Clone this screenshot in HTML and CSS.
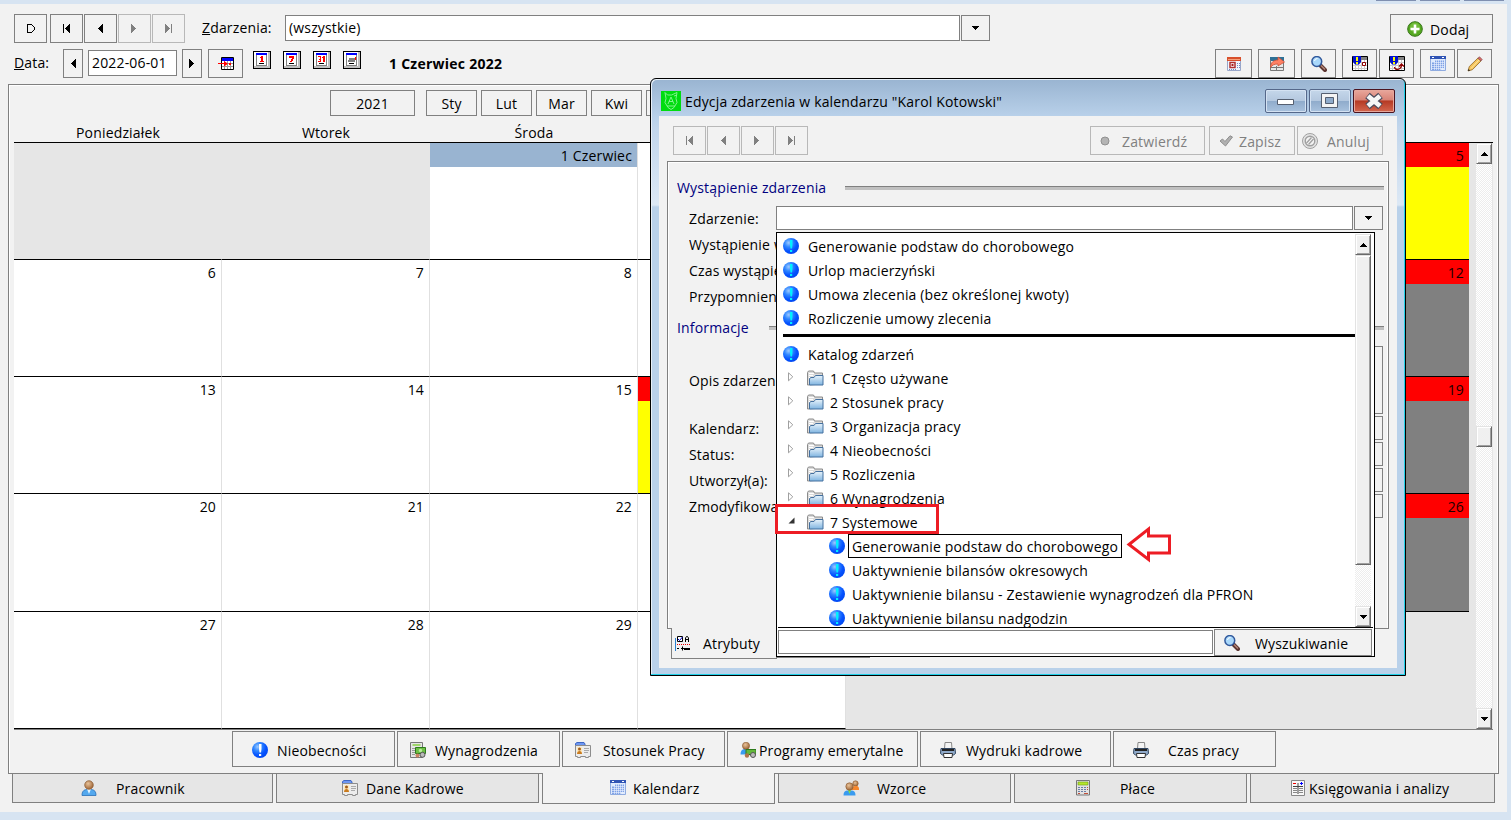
FILE: index.html
```html
<!DOCTYPE html>
<html lang="pl">
<head>
    <meta charset="UTF-8">
    <title>Kalendarz</title>
    <link rel="stylesheet" href="styles.css">
</head>
<body>
    <!-- icons -->
    <svg class="defs" width="0" height="0">
        <defs>
            <radialGradient id="ball" cx="0.35" cy="0.3" r="0.75">
                <stop offset="0" stop-color="#9cc9ff"/>
                <stop offset="0.35" stop-color="#2f86ff"/>
                <stop offset="0.7" stop-color="#0552ff"/>
                <stop offset="1" stop-color="#0048f0"/>
            </radialGradient>
            <linearGradient id="folderFill" x1="0" y1="0" x2="0" y2="1">
                <stop offset="0" stop-color="#e8f3fb"/>
                <stop offset="1" stop-color="#7fb4e0"/>
            </linearGradient>
            <radialGradient id="skin" cx="0.4" cy="0.35" r="0.7">
                <stop offset="0" stop-color="#e8c39a"/>
                <stop offset="1" stop-color="#9a5f30"/>
            </radialGradient>
        </defs>
        <symbol id="first" viewBox="0 0 12 12"><path d="M3 2h1v9H3zM9 2h1v9H9zM8 3h1v7H8zM7 4h1v5H7zM6 5h1v3H6zM5 6h1v1H5z" fill="currentColor"/></symbol>
        <symbol id="prev" viewBox="0 0 12 12"><path d="M8 2h1v9H8zM7 3h1v7H7zM6 4h1v5H6zM5 5h1v3H5zM4 6h1v1H4z" fill="currentColor"/></symbol>
        <symbol id="next" viewBox="0 0 12 12"><path d="M3 2h1v9H3zM4 3h1v7H4zM5 4h1v5H5zM6 5h1v3H6zM7 6h1v1H7z" fill="currentColor"/></symbol>
        <symbol id="last" viewBox="0 0 12 12"><path d="M9 2h1v9H9zM3 2h1v9H3zM4 3h1v7H4zM5 4h1v5H5zM6 5h1v3H6zM7 6h1v1H7z" fill="currentColor"/></symbol>
        <symbol id="play" viewBox="0 0 12 12"><path d="M3 2h5v1H4v7h4v1H3zM8 3h1v1H8zM9 4h1v1H9zM10 5h1v3h-1zM9 8h1v1H9zM8 9h1v1H8z" fill="#000"/></symbol>
        <symbol id="down" viewBox="0 0 7 4"><path d="M0 0h7v1H0zM1 1h5v1H1zM2 2h3v1H2zM3 3h1v1H3z" fill="#000"/></symbol>
        <symbol id="up" viewBox="0 0 7 4"><path d="M0 3h7v1H0zM1 2h5v1H1zM2 1h3v1H2zM3 0h1v1H3z" fill="#000"/></symbol>
        <symbol id="info" viewBox="0 0 16 16"><circle cx="8" cy="8" r="8" fill="url(#ball)"/><path d="M7 2h2.500v5L9 10.500H7.500L7 7zM7 12h2.200v2H7z" fill="#00f0ff"/></symbol>
        <symbol id="infoWhite" viewBox="0 0 16 16"><circle cx="8" cy="8" r="8" fill="url(#ball)"/><path d="M7 2h2.500v5L9 10.500H7.500L7 7zM7 12h2.200v2H7z" fill="#fff"/></symbol>
        <symbol id="folder" viewBox="0 0 17 16">
            <path d="M.5 15V2.500l1-1.500h5l1 2h8V14z" fill="#dcdcdc" stroke="#8a8a8a"/>
            <path d="M2 3.500h5M2 5.500h4M2 7.500h1M2 9.500h1M2 11.500h1" stroke="#fff"/>
            <path d="M2.500 15V8.500L4 7.500h3l1.500-2H16v9.500z" fill="url(#folderFill)" stroke="#44709f"/>
        </symbol>
        <symbol id="closed" viewBox="0 0 6 10"><path d="M.5.8v8L4.800 4.800z" fill="#fff" stroke="#a0a0a0"/></symbol>
        <symbol id="open" viewBox="0 0 7 7"><path d="M6.500.5v6H.5z" fill="#333"/></symbol>
        <symbol id="plus" viewBox="0 0 16 16"><circle cx="8" cy="8" r="7.300" fill="#55a820" stroke="#38761a"/><circle cx="8" cy="6.500" r="5" fill="#8bd050" opacity=".5"/><path d="M8 3.500v9M3.500 8h9" stroke="#fff" stroke-width="2.600"/></symbol>
        <symbol id="lens" viewBox="0 0 16 16"><path d="M9 9l5 5" stroke="#5b3430" stroke-width="4" stroke-linecap="round"/><path d="M10 9.500l4 4" stroke="#b58878" stroke-width="1.500"/><circle cx="5.800" cy="5.500" r="4.900" fill="#a9d8fb" stroke="#31599c" stroke-width="1.500"/><path d="M3.500 5a3 3 0 0 1 3-2.500" stroke="#fff" fill="none"/></symbol>
        <symbol id="pencil" viewBox="0 0 16 16"><path d="M1 15l1.300-4.500L11 2l3 3-8.600 8.700z" fill="#f4c35b" stroke="#8d6526" stroke-width=".8"/><path d="M4 12.500l8.300-8.700" stroke="#ffe9a0"/><path d="M10.800 2.200L12.500.8l2.700 2.700L14 5z" fill="#d46a6a" stroke="#8b5050" stroke-width=".7"/><path d="M1 15l.6-2 1.500 1.400z" fill="#222"/></symbol>
        <symbol id="calBlue" viewBox="0 0 16 16"><path d="M.5.5h15v14H.5z" fill="#dfeafd" stroke="#8fabe0"/><path d="M0 0h16v3H0z" fill="#3054b4"/><path d="M2 1h2v1H2zM12 1h2v1h-2z" fill="#fff"/><path d="M5 4.500h9v7.500h-3v2H2V6.500h3z" fill="#7ea2e6"/><path d="M2 8.500h12M2 10.500h12M4.500 5v9M6.500 4v10M8.500 4v10M10.500 4v10M12.500 4v10M5 6.500h9M2 12.500h9" stroke="#eef4ff" stroke-width=".6"/></symbol>
        <symbol id="calRed" viewBox="0 0 16 16"><path d="M1.500 1.500h13v13h-13z" fill="#f3f6fc" stroke="#98a6ca"/><path d="M1 1h14v4H1z" fill="#d8502c"/><path d="M2 3h12v1H2z" fill="#f5a27d"/><path d="M4 6.500h5v5H4z" fill="#fff" stroke="#b03030" stroke-width="1.500"/><path d="M5.500 8H7.500v2h-2z" fill="#a51c1c"/><path d="M11 7h1v1h-1zM13 7h1v1h-1zM11 9h1v1h-1zM13 9h1v1h-1zM11 11h1v1h-1zM13 11h1v1h-1zM3 13h1v1H3zM5 13h1v1H5zM7 13h1v1H7zM9 13h1v1H9z" fill="#7188bd"/></symbol>
        <symbol id="calArrow" viewBox="0 0 16 16"><path d="M1 1h14v14H1z" fill="#e8e8e8"/><path d="M1 1h14v4H1z" fill="#2e7096"/><path d="M1.500 4v10.500h13V6M2 11.500h12M7.500 10v5" fill="none" stroke="#777"/><path d="M1.500 11.500C1.500 6 5 4 9 4V1l6.500 5L9 10V8C5.500 8 3 9 1.500 11.500z" fill="#ff8064" stroke="#c85038" stroke-width=".8"/></symbol>
        <symbol id="calWarn" viewBox="0 0 16 16"><path d="M.5.5h15v14H.5z" fill="#fff" stroke="#000"/><path d="M1 1h14v3H1z" fill="#808080"/><path d="M3.500 4v10M6.500 4v10M9.500 4v10M12.500 4v10M1 6.500h14M1 9.500h14M1 12.500h14" stroke="#ccc"/><path d="M1 0h8v6L7 8.500H3L1 6z" fill="#0010d0"/><path d="M4 1h2v4H4zM4 6h2v2H4z" fill="#ffff00"/></symbol>
        <symbol id="goCal" viewBox="0 0 16 13"><path d="M3.500.5h12v12h-12z" fill="#fff" stroke="#000"/><path d="M4 1h11v3H4z" fill="#0000ff"/><path d="M6.500 4v8M9.500 4v8M12.500 4v8M4 9.500h11M4 6.500h11" stroke="#999"/><path d="M0 6h6V4l4 2.700L6 9.500V7H0z" fill="#f00"/><path d="M11 6h2v2h-2z" fill="#f00"/></symbol>
        <symbol id="view" viewBox="0 0 18 18"><path d="M0 0h18v18H0z" fill="#000"/><path d="M1 1h16v16H1z" fill="#c0c0c0"/><path d="M1 1h14v14H1z" fill="#fff"/><path d="M3 3h11v12H3z" fill="#808080"/><path d="M4 3h9v11H4z" fill="#fff"/><path d="M3 2h11v2H3z" fill="#00f"/><path d="M6 12h5v1H6z" fill="#000"/></symbol>
        <symbol id="printer" viewBox="0 0 16 16"><path d="M4.500 7L5 .5h6.500L12 7z" fill="#f4f4f4" stroke="#888"/><path d="M1 6.500h14l.5 5-2 1.500h-11L.5 11.500z" fill="#8fa9c9" stroke="#30455f"/><path d="M2 7h12v2H2z" fill="#222"/><path d="M3.500 11.500h9l-.5 4H4z" fill="#fff" stroke="#333"/></symbol>
        <symbol id="person" viewBox="0 0 16 16"><path d="M1 15.500c0-4 1.500-5.500 4.500-6h5c3 .5 4.500 2 4.500 6z" fill="#53a8ee" stroke="#2a70b8" stroke-width=".8"/><path d="M6 9h4l-2 5z" fill="#e4f5ff"/><circle cx="8" cy="5" r="4.300" fill="url(#skin)" stroke="#8a5a30" stroke-width=".7"/></symbol>
        <symbol id="people" viewBox="0 0 16 16"><circle cx="12.500" cy="3.500" r="2.700" fill="url(#skin)" stroke="#8a5a30" stroke-width=".6"/><path d="M9 10c0-3 1-4 4-4s3 2 3 4z" fill="#f5862c"/><path d="M.5 15.500c0-3 1-4.500 3.500-5h5c2.500.5 3.500 2 3.500 5z" fill="#3a9bef"/><path d="M5 10h3l-1.500 4z" fill="#7ee04a"/><circle cx="6.500" cy="6.500" r="3.700" fill="url(#skin)" stroke="#8a5a30" stroke-width=".6"/></symbol>
        <symbol id="pension" viewBox="0 0 16 16"><path d="M.5 12.500c0-3 1-5 3.500-5.500h4c2 .5 3 2 3 5.500z" fill="#3a9bef"/><circle cx="6" cy="3.800" r="3.600" fill="url(#skin)" stroke="#8a5a30" stroke-width=".6"/><path d="M6 7.500h10v5H6z" fill="#62b83a" stroke="#2e7a1c"/><circle cx="7" cy="13.500" r="2.200" fill="#b0744a"/><circle cx="13" cy="13" r="2.500" fill="#bbb" stroke="#555"/></symbol>
        <symbol id="card" viewBox="0 0 16 16"><path d="M.5 4V1.500L2 .5h7l1 1.500V4z" fill="#6d97f3" stroke="#3e66c4"/><path d="M.5 3.500h15v11h-2v1h-3v-1h-5v1h-3v-1h-2z" fill="#ececec" stroke="#8d8d8d"/><path d="M2 5h5v7H2z" fill="#ffe9b8"/><circle cx="4.500" cy="7" r="1.500" fill="#a05b1d"/><path d="M2 12c0-4 5-4 5 0z" fill="#c97b1f"/><path d="M9 6.500h5M9 8.500h5M9 10.500h4" stroke="#aaa"/></symbol>
        <symbol id="pay" viewBox="0 0 16 16"><path d="M.5.500h12v15H.5z" fill="#e6e6e6" stroke="#777"/><path d="M2.500 2h8v2h-8z" fill="#9fd56b"/><path d="M2 6.500h3M2 8.500h3M2 10.500h3M2 12.500h3" stroke="#999"/><path d="M5.500 5.500h10v6h-10z" fill="#6cc044" stroke="#2e7a1c"/><circle cx="10.500" cy="8.500" r="1.700" fill="#b8eb9a"/><circle cx="7.500" cy="13.500" r="2" fill="#c98462"/><circle cx="12.500" cy="12.800" r="2.500" fill="#bbb" stroke="#555"/></symbol>
        <symbol id="calc" viewBox="0 0 14 16"><path d="M.5.500h13v14.500H.5z" fill="#e2e2e2" stroke="#777"/><path d="M2 2h10v3H2z" fill="#b6e52c" stroke="#6b9a14" stroke-width=".6"/><path d="M2 7h2v1H2zM5 7h2v1H5zM8 7h2v1H8zM2 9h2v1H2zM5 9h2v1H5zM8 9h2v1H8zM2 11h2v1H2zM5 11h2v1H5zM8 11h2v1H8z" fill="#6a7ea6"/><path d="M11 7h1v1h-1zM11 9h1v1h-1zM2 13h2v1H2zM8 13h4v1H8z" fill="#c0503c"/></symbol>
        <symbol id="ledger" viewBox="0 0 14 16"><path d="M.5.500h13v15H.5z" fill="#f7f7f7" stroke="#888"/><path d="M2 3h3v1H2z" fill="#e00"/><path d="M9 3h3v1H9zM10 2h1v3h-1z" fill="#00f"/><path d="M7 3v11M2 6.500h10" stroke="#444"/><path d="M2 8.500h4M2 10.500h4M2 12.500h4M8 8.500h4M8 10.500h4M8 12.500h4" stroke="#888"/></symbol>
        <symbol id="attr" viewBox="0 0 15 15"><path d="M.5 2v13" stroke="#2a80d0"/><path d="M2.500.5h5v5h-5z" fill="#fff" stroke="#000"/><path d="M3 3l1.500 1.500L7.500 1" fill="none" stroke="#0000c0"/><path d="M10.500 6V2l1-1.500h1l1 1.500v4M10.500 3.500h3" fill="none" stroke="#000"/><path d="M2 8.500h13" stroke="#e00" stroke-dasharray="1 1"/><path d="M2 12.500h2M6 12.500h9M7.500 10.500v4M9 13.500h6" stroke="#000"/></symbol>
        <symbol id="check" viewBox="0 0 14 12"><path d="M1 6l2.500-2L6 6.500 11 .8 13.500 2 6.500 11z" fill="#b0b0b0" stroke="#8e8e8e"/></symbol>
        <symbol id="cancel" viewBox="0 0 16 16"><circle cx="8" cy="8" r="7.500" fill="#e4e4e4" stroke="#a0a0a0"/><circle cx="8" cy="8" r="4.800" fill="#f4f4f4" stroke="#a0a0a0" stroke-width="1.400"/><path d="M4.500 10l5-5.500M6.500 11.500l5-5.500" stroke="#a0a0a0" stroke-width="1.300"/></symbol>
        <symbol id="dot" viewBox="0 0 10 10"><circle cx="5" cy="5" r="4" fill="#b4b4b4" stroke="#909090"/></symbol>
    </svg>

    <div class="window-buttons"><i></i><i></i><i></i></div>
    <div class="app">
        <div class="toolbar toolbar-top">
            <div class="btn nav first-nav"><svg class="ar"><use href="#play"/></svg></div>
            <div class="btn nav"><svg class="ar"><use href="#first"/></svg></div>
            <div class="btn nav"><svg class="ar"><use href="#prev"/></svg></div>
            <div class="btn nav off"><svg class="ar"><use href="#next"/></svg></div>
            <div class="btn nav off"><svg class="ar"><use href="#last"/></svg></div>
            <label class="events-label"><u>Z</u>darzenia:</label>
            <div class="input events">(wszystkie)</div>
            <div class="btn drop"><svg class="tri"><use href="#down"/></svg></div>
            <div class="btn add"><svg class="i16"><use href="#plus"/></svg><span>Dodaj</span></div>
        </div>
        <div class="toolbar toolbar-date">
            <label class="date-label"><u>D</u>ata:</label>
            <div class="btn step"><svg class="ar"><use href="#prev"/></svg></div>
            <div class="input date">2022-06-01</div>
            <div class="btn step"><svg class="ar"><use href="#next"/></svg></div>
            <div class="btn today"><svg class="go"><use href="#goCal"/></svg></div>
            <div class="views">
                <svg class="i18" viewBox="0 0 18 18"><use href="#view"/><path d="M8 5h2v6H8zM7 6h1v1H7zM7 10h4v1H7z" fill="#f00"/></svg>
                <svg class="i18" viewBox="0 0 18 18"><use href="#view"/><path d="M6 5h5v2l-2 4H7l2-4H6z" fill="#f00"/></svg>
                <svg class="i18" viewBox="0 0 18 18"><use href="#view"/><path d="M5 5h3v6H5v-1h2V9H6V8h1V6H5zM9 6h1V5h2v6h-2V7H9z" fill="#f00"/></svg>
                <svg class="i18" viewBox="0 0 18 18"><use href="#view"/><path d="M6 7h6v4H5V9h1z" fill="#808080"/><path d="M12 6h1v3h-1z" fill="#f00"/></svg>
            </div>
            <b class="current">1 Czerwiec 2022</b>
            <div class="tools">
                <div class="btn wide"><svg class="i16"><use href="#calRed"/></svg></div>
                <div class="btn wide"><svg class="i16"><use href="#calArrow"/></svg></div>
                <div class="btn"><svg class="i16"><use href="#lens"/></svg></div>
                <div class="btn"><svg class="i16" viewBox="0 0 16 16"><use href="#calWarn"/><path d="M10.500 6.500h3v3h-3z" fill="#fff" stroke="#900000"/></svg></div>
                <div class="btn near"><svg class="i16" viewBox="0 0 16 16"><use href="#calWarn"/><path d="M5.500 11c0 3.500 7 3.500 7-2.500M10 10.500l2.500-2.500L15 10.500" fill="none" stroke="#900000" stroke-width="1.300"/></svg></div>
                <div class="btn"><svg class="i16"><use href="#calBlue"/></svg></div>
                <div class="btn near"><svg class="i16"><use href="#pencil"/></svg></div>
            </div>
        </div>

        <div class="panel">
            <div class="months">
                <div class="btn year">2021</div>
                <div class="btn">Sty</div>
                <div class="btn">Lut</div>
                <div class="btn">Mar</div>
                <div class="btn">Kwi</div>
                <div class="btn"></div>
            </div>
            <div class="weekdays"><span>Poniedziałek</span><span>Wtorek</span><span>Środa</span></div>
            <div class="calendar">
                <div class="grid">
                    <div class="day out"></div><div class="day out"></div><div class="day selected"><p>1 Czerwiec</p></div><div class="day"></div><div class="day"></div><div class="day"></div><div class="day free"><p>5</p></div>
                    <div class="day"><p>6</p></div><div class="day"><p>7</p></div><div class="day"><p>8</p></div><div class="day"></div><div class="day"></div><div class="day"></div><div class="day sunday"><p>12</p></div>
                    <div class="day"><p>13</p></div><div class="day"><p>14</p></div><div class="day"><p>15</p></div><div class="day free"><p></p></div><div class="day"></div><div class="day"></div><div class="day sunday"><p>19</p></div>
                    <div class="day"><p>20</p></div><div class="day"><p>21</p></div><div class="day"><p>22</p></div><div class="day"></div><div class="day"></div><div class="day"></div><div class="day sunday"><p>26</p></div>
                    <div class="day"><p>27</p></div><div class="day"><p>28</p></div><div class="day"><p>29</p></div><div class="day"></div><div class="day out last"></div><div class="day out last"></div><div class="day out last"></div>
                </div>
                <div class="scrollbar">
                    <div class="sb"><svg class="tri"><use href="#up"/></svg></div>
                    <div class="sb thumb"></div>
                    <div class="sb end"><svg class="tri"><use href="#down"/></svg></div>
                </div>
            </div>
            <div class="actions">
                <div class="btn g9"><svg class="i16"><use href="#infoWhite"/></svg><span>Nieobecności</span></div>
                <div class="btn g9 tight"><svg class="i16"><use href="#pay"/></svg><span>Wynagrodzenia</span></div>
                <div class="btn g12 tight"><svg class="i16"><use href="#card"/></svg><span>Stosunek Pracy</span></div>
                <div class="btn g3 tight w191"><svg class="i16"><use href="#pension"/></svg><span>Programy emerytalne</span></div>
                <div class="btn g10 w191"><svg class="i16"><use href="#printer"/></svg><span>Wydruki kadrowe</span></div>
                <div class="btn g19"><svg class="i16"><use href="#printer"/></svg><span>Czas pracy</span></div>
            </div>
        </div>
        <div class="tabs">
            <div class="tab t1"><svg class="i16"><use href="#person"/></svg><span>Pracownik</span></div>
            <div class="tab t2"><svg class="i16"><use href="#card"/></svg><span>Dane Kadrowe</span></div>
            <div class="tab t3 active"><svg class="i16"><use href="#calBlue"/></svg><span>Kalendarz</span></div>
            <div class="tab t4"><svg class="i16"><use href="#people"/></svg><span>Wzorce</span></div>
            <div class="tab t5"><svg class="i16"><use href="#calc"/></svg><span>Płace</span></div>
            <div class="tab t6"><svg class="i16"><use href="#ledger"/></svg><span>Księgowania i analizy</span></div>
        </div>
    </div>

    <!-- event dialog -->
    <div class="dialog">
        <div class="titlebar">
            <svg class="logo" viewBox="0 0 20 20"><path d="M0 0h20v20H0z" fill="#00dc10"/><path d="M4 1.500L6.500 4h4L16 1.500l-1 6 1 4-3 5-3 2-3-2-3-5 1-4zM7 13l3-7 3 7M8 10.500h4M6 15h8M13 5l3-1" fill="none" stroke="#8cf598" stroke-width=".9"/></svg>
            <span class="title">Edycja zdarzenia w kalendarzu "Karol Kotowski"</span>
            <div class="caption"><svg viewBox="0 0 40 22"><path d="M11.500 9.500h16v5h-16z" fill="#fff" stroke="#555f70"/></svg></div>
            <div class="caption"><svg viewBox="0 0 40 22"><path d="M11.500 3.500h16v14h-16z" fill="#f4f4f4" stroke="#555f70"/><path d="M15.500 7.500h8v6h-8z" fill="#8fabcb" stroke="#555f70"/></svg></div>
            <div class="caption close"><svg viewBox="0 0 40 22"><path d="M13.500 5.500l13 11M26.500 5.500l-13 11" stroke="#4b4b5c" stroke-width="7"/><path d="M14 6l12 10M26 6l-12 10" stroke="#f6f6f6" stroke-width="4.800"/></svg></div>
        </div>
        <div class="client">
            <div class="dialog-bar">
                <div class="btn nav off"><svg class="ar"><use href="#first"/></svg></div>
                <div class="btn nav off"><svg class="ar"><use href="#prev"/></svg></div>
                <div class="btn nav off"><svg class="ar"><use href="#next"/></svg></div>
                <div class="btn nav off"><svg class="ar"><use href="#last"/></svg></div>
                <div class="btn off commit"><svg class="i10"><use href="#dot"/></svg><span>Zatwierdź</span></div>
                <div class="btn off save"><svg class="i14"><use href="#check"/></svg><span>Zapisz</span></div>
                <div class="btn off cancel"><svg class="i16"><use href="#cancel"/></svg><span>Anuluj</span></div>
            </div>
            <div class="form">
                <div class="section"><span>Wystąpienie zdarzenia</span><hr></div>
                <div class="field"><label>Zdarzenie:</label><div class="input"></div><div class="btn drop"><svg class="tri"><use href="#down"/></svg></div></div>
                <div class="field"><label>Wystąpienie w</label></div>
                <div class="field"><label>Czas wystąpienia</label></div>
                <div class="field"><label>Przypomnienie</label></div>
                <div class="section second"><span>Informacje</span><hr></div>
                <div class="field memo"><label>Opis zdarzenia</label><div class="box"></div></div>
                <div class="field"><label>Kalendarz:</label><div class="box"></div></div>
                <div class="field"><label>Status:</label><div class="box"></div></div>
                <div class="field"><label>Utworzył(a):</label><div class="box"></div></div>
                <div class="field"><label>Zmodyfikował(a)</label><div class="box"></div></div>
            </div>
            <div class="form-tabs">
                <div class="attr-tab"><svg class="i15"><use href="#attr"/></svg><span>Atrybuty</span></div>
                <div class="back-tab"></div>
            </div>
        </div>
    </div>

    <div class="popup">
        <div class="list">
            <div class="rows">
                <div class="row"><svg class="i16"><use href="#info"/></svg>Generowanie podstaw do chorobowego</div>
                <div class="row"><svg class="i16"><use href="#info"/></svg>Urlop macierzyński</div>
                <div class="row"><svg class="i16"><use href="#info"/></svg>Umowa zlecenia (bez określonej kwoty)</div>
                <div class="row"><svg class="i16"><use href="#info"/></svg>Rozliczenie umowy zlecenia</div>
                <div class="divider"></div>
                <div class="row"><svg class="i16"><use href="#info"/></svg>Katalog zdarzeń</div>
                <div class="row node"><svg class="exp"><use href="#closed"/></svg><svg class="fold"><use href="#folder"/></svg>1 Często używane</div>
                <div class="row node"><svg class="exp"><use href="#closed"/></svg><svg class="fold"><use href="#folder"/></svg>2 Stosunek pracy</div>
                <div class="row node"><svg class="exp"><use href="#closed"/></svg><svg class="fold"><use href="#folder"/></svg>3 Organizacja pracy</div>
                <div class="row node"><svg class="exp"><use href="#closed"/></svg><svg class="fold"><use href="#folder"/></svg>4 Nieobecności</div>
                <div class="row node"><svg class="exp"><use href="#closed"/></svg><svg class="fold"><use href="#folder"/></svg>5 Rozliczenia</div>
                <div class="row node"><svg class="exp"><use href="#closed"/></svg><svg class="fold"><use href="#folder"/></svg>6 Wynagrodzenia</div>
                <div class="row node"><svg class="exp opened"><use href="#open"/></svg><svg class="fold"><use href="#folder"/></svg>7 Systemowe</div>
                <div class="row leaf"><svg class="i16"><use href="#info"/></svg><span class="focus">Generowanie podstaw do chorobowego</span></div>
                <div class="row leaf"><svg class="i16"><use href="#info"/></svg>Uaktywnienie bilansów okresowych</div>
                <div class="row leaf"><svg class="i16"><use href="#info"/></svg>Uaktywnienie bilansu - Zestawienie wynagrodzeń dla PFRON</div>
                <div class="row leaf"><svg class="i16"><use href="#info"/></svg>Uaktywnienie bilansu nadgodzin</div>
            </div>
            <div class="scrollbar">
                <div class="sb"><svg class="tri"><use href="#up"/></svg></div>
                <div class="sb long"></div>
                <div class="sb end"><svg class="tri"><use href="#down"/></svg></div>
            </div>
        </div>
        <div class="search">
            <div class="input"></div>
            <div class="btn"><svg class="i16"><use href="#lens"/></svg><span>Wyszukiwanie</span></div>
        </div>
    </div>

    <!-- red marks over the tree -->
    <div class="mark"></div>
    <svg class="arrow" viewBox="0 0 46 38"><path d="M3 19.500L22.500 4v7h21v17h-21v6.500z" fill="none" stroke="#ed1c24" stroke-width="3"/></svg>
</body>
</html>
```
FILE: styles.css
```css
* {
    box-sizing: border-box;
}
body {
    position: relative;
    width: 1511px;
    height: 820px;
    margin: 0;
    padding: 4px 4px 0 0;
    overflow: hidden;
    background: #d7e4f2;
    font: 14px/20px "Open Sans", "Noto Sans", sans-serif;
    letter-spacing: 0.16px;
    color: #000;
    white-space: nowrap;
}
svg {
    display: block;
    flex: none;
}
.defs {
    position: absolute;
}
p, hr {
    margin: 0;
}
.i10 { width: 10px; height: 10px; }
.i14 { width: 14px; height: 12px; }
.i15 { width: 15px; height: 15px; }
.i16 { width: 16px; height: 16px; }
.i18 { width: 18px; height: 18px; shape-rendering: crispEdges; }
.ar { width: 12px; height: 12px; margin: -1px 1px 0 0; shape-rendering: crispEdges; }
.tri { width: 7px; height: 4px; shape-rendering: crispEdges; }
.go { width: 16px; height: 13px; }

.window-buttons {
    position: absolute;
    top: 0;
    right: 7px;
    display: flex;
    gap: 4px;
}
.window-buttons i {
    width: 40px;
    height: 1px;
    background: #7f8fb0;
}

.btn {
    display: flex;
    align-items: center;
    justify-content: center;
    height: 29px;
    border: 1px solid #808080;
    background: #f2f2f2;
}
.btn span, .tab span {
    padding-top: 2px;
}
.btn.off {
    border-color: #b8b8b8;
    color: #808080;
}
.nav {
    width: 33px;
    margin-right: 1px;
}
.input {
    border: 1px solid #808080;
    background: #fff;
}
.drop {
    width: 29px;
    height: 26px;
}

/* main window */
.app {
    height: 808px;
    padding: 10px 8px 0 8px;
    background: #f2f2f2;
}
.toolbar {
    display: flex;
    width: 1485px;
    height: 35px;
    padding-left: 6px;
}
.first-nav {
    margin-right: 3px;
}
.events-label {
    width: 99px;
    padding: 4px 0 0 16px;
}
.events {
    width: 675px;
    height: 26px;
    margin: 1px 1px 0 0;
    padding: 2px 3px;
}
.toolbar-top .drop {
    margin-top: 1px;
}
.add {
    width: 103px;
    margin-left: auto;
    padding-left: 16px;
    justify-content: flex-start;
    gap: 7px;
}
.toolbar-date {
    padding-right: 1px;
}
.date-label {
    width: 49px;
    padding-top: 4px;
}
.step {
    width: 20px;
}
.step .ar {
    margin-right: 0;
}
.date {
    width: 89px;
    height: 26px;
    margin: 1px 5px 0;
    padding: 2px 3px;
}
.today {
    width: 35px;
    margin-left: 6px;
}
.views {
    display: flex;
    gap: 12px;
    margin: 2px 0 0 10px;
}
.current {
    margin: 5px 0 0 28px;
    letter-spacing: 0.25px;
}
.tools {
    display: flex;
    gap: 6px;
    margin-left: auto;
}
.tools .btn {
    width: 35px;
}
.tools .wide {
    width: 37px;
}
.tools .near {
    margin-left: -4px;
}

.panel {
    width: 1491px;
    height: 690px;
    border: 1px solid #808080;
    box-shadow: inset 1px 1px #fff, inset -1px 0 #fff;
    padding: 5px 5px 0;
}
.months {
    display: flex;
    gap: 4px;
    width: 700px;
    margin-left: 316px;
}
.months .btn {
    width: 51px;
    height: 26px;
    padding-top: 2px;
}
.months .year {
    width: 85px;
    margin-right: 7px;
}
.weekdays {
    display: flex;
    height: 26px;
    padding-top: 7px;
}
.weekdays span {
    width: 208px;
    text-align: center;
}
.calendar {
    display: flex;
    justify-content: space-between;
    width: 1479px;
    height: 588px;
    padding-right: 1px;
    border-top: 1px solid #000;
    border-bottom: 1px solid #808080;
    background: #e6e6e6;
}
.grid {
    display: grid;
    grid-template-columns: repeat(6, 208px) 207px;
    grid-template-rows: 117px 117px 117px 118px 117px;
}
.day {
    border-right: 1px solid #e0e0e0;
    border-bottom: 1px solid #000;
    background: #fff;
    text-align: right;
}
.day p {
    height: 24px;
    padding: 3px 5px 0 0;
}
.day.out {
    background: #e6e6e6;
    border-right-color: #e6e6e6;
}
.day.last {
    border-bottom-color: #e6e6e6;
}
.selected p {
    background: #99b4d1;
}
.free {
    background: #ff0;
}
.free p, .sunday p {
    background: #f00;
    color: #200;
}
.sunday {
    background: #808080;
}
.free, .sunday {
    border-right: 0;
}

.scrollbar {
    display: flex;
    flex-direction: column;
    width: 16px;
    background: repeating-conic-gradient(#fff 0 25%, #ededed 0 50%) 0 0 / 2px 2px;
}
.sb {
    display: flex;
    align-items: center;
    justify-content: center;
    height: 21px;
    border: 1px solid #e3e3e3;
    border-right-color: #696969;
    border-bottom-color: #696969;
    background: #f0f0f0;
    box-shadow: inset 1px 1px #fff, inset -1px -1px #a0a0a0;
}
.thumb {
    margin-top: 262px;
}
.end {
    margin-top: auto;
}

.actions {
    display: flex;
    gap: 2px;
    padding: 1px 0 0 218px;
}
.actions .btn {
    width: 163px;
    height: 36px;
    padding: 2px 0 0 19px;
    justify-content: flex-start;
}
.actions .tight {
    padding-left: 12px;
}
.actions .w191 {
    width: 191px;
}
.g3 { gap: 3px; }
.g9 { gap: 9px; }
.g10 { gap: 10px; }
.g12 { gap: 12px; }
.g19 { gap: 19px; }

.tabs {
    display: flex;
    gap: 3px;
    padding-left: 4px;
}
.tab {
    display: flex;
    align-items: center;
    height: 29px;
    border: 1px solid #808080;
    border-top: 0;
    background: #e6e6e6;
}
.tab.active {
    height: 31px;
    margin-top: -1px;
    background: #f2f2f2;
}
.t1 { width: 261px; padding-left: 68px; gap: 19px; }
.t2 { width: 263px; padding-left: 65px; gap: 8px; }
.t3 { width: 233px; padding-left: 67px; gap: 7px; }
.t4 { width: 233px; padding-left: 64px; gap: 18px; }
.t5 { width: 233px; padding-left: 60px; gap: 29px; }
.t6 { width: 245px; padding-left: 39px; gap: 3px; }

/* dialog */
.dialog {
    position: absolute;
    left: 650px;
    top: 78px;
    width: 756px;
    height: 598px;
    padding: 0 7px 6px;
    border: 1px solid #000;
    border-radius: 6px 6px 0 0;
    background: linear-gradient(#99b4d1, #b9d1ea 38px, #c2d6ec 50px, #dce8f5 126px, #b9d1ea 128px);
    box-shadow: inset -1px -1px #20d0e8, inset 1px 1px #e8f0f8;
}
.titlebar {
    display: flex;
    gap: 2px;
    height: 37px;
    padding: 10px 3px 0;
}
.logo {
    width: 20px;
    height: 20px;
    margin: 2px 2px 0 0;
}
.title {
    margin-right: auto;
    padding-top: 3px;
}
.caption {
    width: 42px;
    height: 24px;
    border: 1px solid #55688a;
    border-radius: 2px;
    background: linear-gradient(#c5d7ea 0, #b4c8df 48%, #8fabcb 50%, #a9c2de);
    box-shadow: inset 0 0 0 1px #d4e2f2;
}
.caption svg {
    width: 40px;
    height: 22px;
}
.close {
    border-color: #4b1420;
    background: linear-gradient(#e9a79c 0, #d88477 45%, #b53a24 50%, #d4674f);
    box-shadow: inset 0 0 0 1px #e6a79c;
}
.client {
    width: 738px;
    height: 552px;
    margin-left: 1px;
    padding: 10px 8px 0;
    background: #f2f2f2;
}
.dialog-bar {
    display: flex;
    width: 716px;
    height: 35px;
    padding-left: 6px;
}
.commit, .save, .cancel {
    justify-content: flex-start;
}
.commit {
    width: 115px;
    margin-left: auto;
    padding-left: 9px;
    gap: 12px;
}
.save {
    width: 86px;
    margin: 0 2px 0 4px;
    padding-left: 9px;
    gap: 6px;
}
.cancel {
    width: 86px;
    padding-left: 4px;
    gap: 9px;
}
.form {
    width: 722px;
    height: 468px;
    padding: 11px 4px 0 9px;
    border: 1px solid #808080;
    box-shadow: inset 1px 1px #fff, inset -1px 0 #fff;
}
.section {
    display: flex;
    align-items: flex-start;
    height: 31px;
    padding-top: 4px;
    color: #000080;
}
.section span {
    width: 168px;
    margin-top: 1px;
}
.section hr {
    flex: 1;
    height: 4px;
    margin-top: 9px;
    border: 0;
    border-top: 1px solid #808080;
    background: #c0c0c0;
}
.section.second {
    height: 38px;
    padding-top: 9px;
}
.second span {
    width: 92px;
}
.field {
    display: flex;
    height: 26px;
    padding-left: 12px;
}
.field label {
    width: 87px;
    padding-top: 5px;
    overflow: hidden;
}
.field .input {
    width: 577px;
    height: 24px;
    margin: 2px 1px 0 0;
}
.field .drop {
    height: 24px;
    margin-top: 2px;
}
.field .box {
    width: 607px;
    height: 24px;
    margin-top: 2px;
    border: 1px solid #808080;
}
.field.memo {
    height: 68px;
}
.memo label {
    padding-top: 25px;
}
.memo .box {
    height: 68px;
    margin-top: 0;
}
.form-tabs {
    display: flex;
    margin: -1px 0 0 4px;
}
.attr-tab {
    display: flex;
    align-items: center;
    gap: 13px;
    width: 106px;
    height: 31px;
    padding-left: 3px;
    border: 1px solid #808080;
    border-top: 0;
    background: #f2f2f2;
}
.attr-tab span {
    padding-top: 1px;
}
.back-tab {
    width: 93px;
    height: 30px;
    border-bottom: 1px solid #808080;
}

/* drop-down tree */
.popup {
    position: absolute;
    left: 776px;
    top: 232px;
    width: 599px;
    height: 425px;
    padding: 1px;
    border: 1px solid #000;
    background: #fff;
}
.list {
    display: flex;
    justify-content: space-between;
    height: 394px;
    border-bottom: 1px solid #000;
    overflow: hidden;
}
.rows {
    width: 578px;
    padding-left: 5px;
}
.row {
    display: flex;
    align-items: center;
    gap: 9px;
    height: 24px;
    padding-top: 2px;
}
.row .i16 {
    margin-top: -3px;
}
.divider {
    height: 3px;
    margin: 4px 0 5px;
    background: #000;
}
.node {
    gap: 6px;
    padding-left: 5px;
}
.exp {
    width: 6px;
    height: 10px;
    margin: -5px 7px 0 0;
}
.exp.opened {
    width: 7px;
    height: 7px;
    margin-right: 6px;
}
.fold {
    width: 17px;
    height: 16px;
    margin-top: -2px;
}
.leaf {
    gap: 7px;
    padding-left: 46px;
}
.focus {
    height: 24px;
    margin: -2px -4px 0;
    padding: 2px 3px 0;
    border: 1px solid #000;
}
.list .scrollbar {
    margin-right: 2px;
}
.long {
    height: 310px;
}
.search {
    display: flex;
    gap: 1px;
    padding-top: 1px;
}
.search .input {
    width: 435px;
    height: 24px;
    margin-top: 1px;
}
.search .btn {
    width: 158px;
    height: 27px;
    padding-left: 9px;
    justify-content: flex-start;
    gap: 15px;
}

.mark {
    position: absolute;
    left: 775px;
    top: 504px;
    width: 164px;
    height: 30px;
    border: 3px solid #ed1c24;
}
.arrow {
    position: absolute;
    left: 1126px;
    top: 525px;
    width: 46px;
    height: 38px;
}
```
